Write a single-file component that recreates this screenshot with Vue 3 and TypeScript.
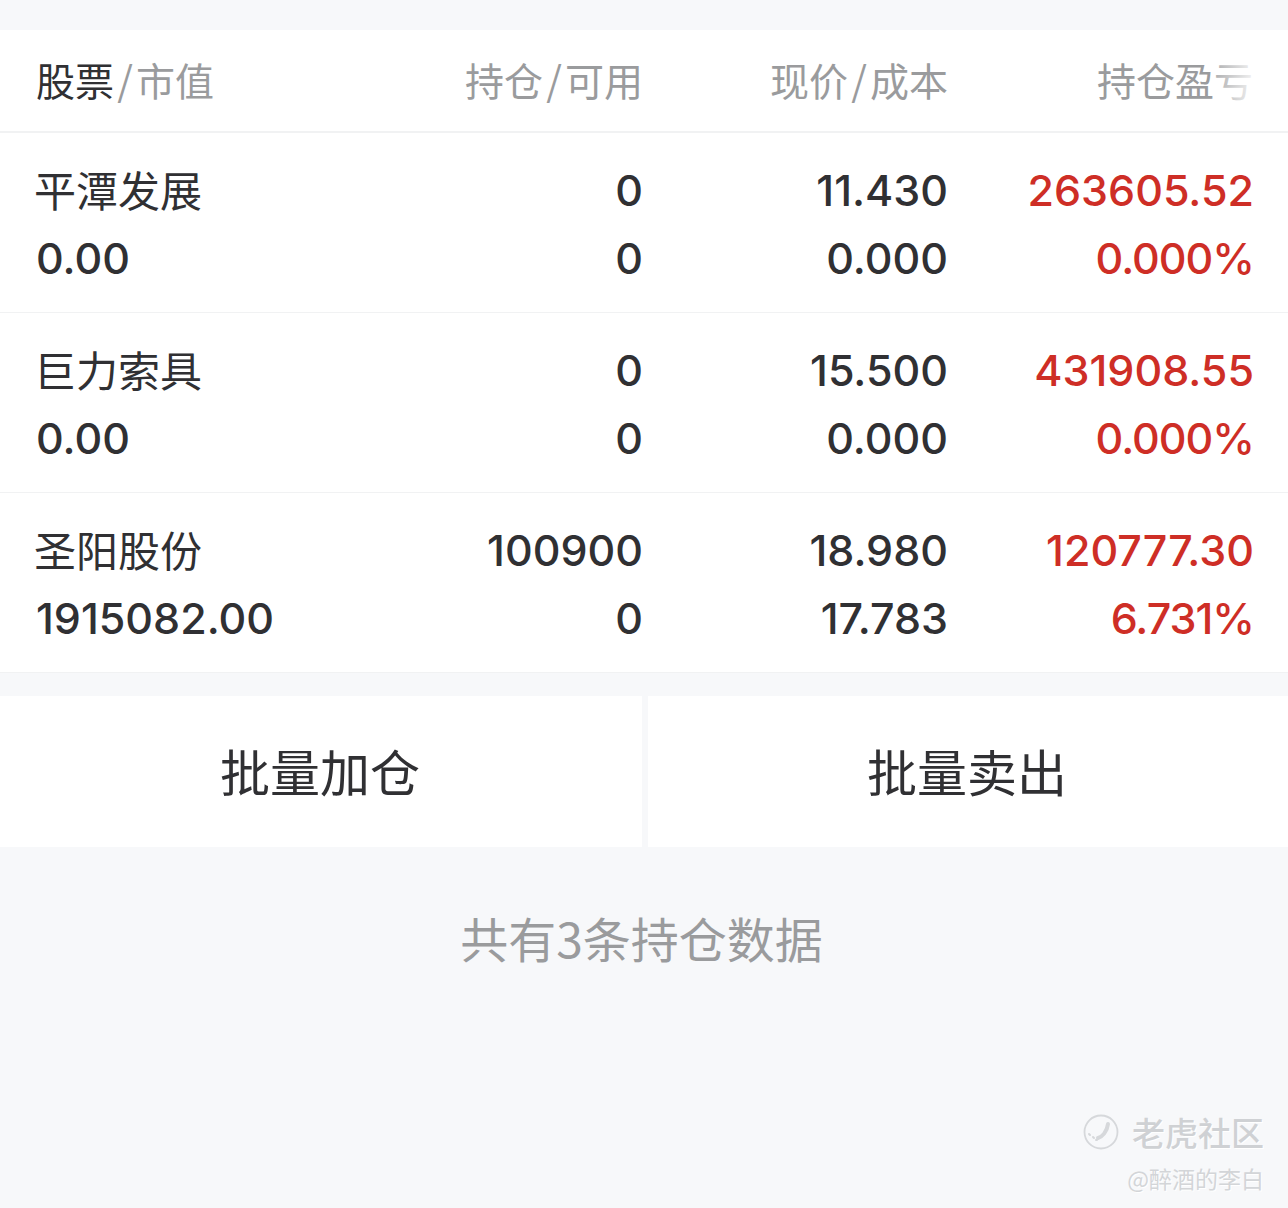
<script setup lang="ts">
interface Row { name: string; value: string; hold: string; avail: string; price: string; cost: string; pl: string; pct: string }
const rows: Row[] = [
  { name: '平潭发展', value: '0.00', hold: '0', avail: '0', price: '11.430', cost: '0.000', pl: '263605.52', pct: '0.000%' },
  { name: '巨力索具', value: '0.00', hold: '0', avail: '0', price: '15.500', cost: '0.000', pl: '431908.55', pct: '0.000%' },
  { name: '圣阳股份', value: '1915082.00', hold: '100900', avail: '0', price: '18.980', cost: '17.783', pl: '120777.30', pct: '6.731%' },
]
</script>

<template>
  <div class="page">
    <div class="table">
      <div class="head grid">
        <div class="hc left"><span class="dark">股票</span><i>/</i><span>市值</span></div>
        <div class="hc"><span>持仓</span><i>/</i><span>可用</span></div>
        <div class="hc"><span>现价</span><i>/</i><span>成本</span></div>
        <div class="hc last"><span>持仓盈亏</span></div>
        <div class="fade"></div>
      </div>
      <div v-for="r in rows" :key="r.name" class="row grid">
        <div class="cell left">
          <div class="name">{{ r.name }}</div>
          <div class="num">{{ r.value }}</div>
        </div>
        <div class="cell">
          <div class="num">{{ r.hold }}</div>
          <div class="num">{{ r.avail }}</div>
        </div>
        <div class="cell">
          <div class="num">{{ r.price }}</div>
          <div class="num">{{ r.cost }}</div>
        </div>
        <div class="cell red">
          <div class="num">{{ r.pl }}</div>
          <div class="num pct">{{ r.pct }}</div>
        </div>
      </div>
    </div>
    <div class="actions">
      <button class="btn">批量加仓</button>
      <button class="btn">批量卖出</button>
    </div>
    <div class="count">共有3条持仓数据</div>
    <div class="mark">
      <div class="brand">
        <svg width="38" height="38" viewBox="0 0 38 38" fill="none" stroke="#d6d8db">
          <circle cx="19" cy="19" r="16.5" stroke-width="1.8" />
          <path d="M16 25c4-1 9-6 10-14" stroke-width="4" stroke-linecap="round" />
          <path d="M7 21l1 1M11 24l1 1M14 27l1 0" stroke-width="2" stroke-linecap="round" />
        </svg>
        <span>老虎社区</span>
      </div>
      <div class="user">@醉酒的李白</div>
    </div>
  </div>
</template>

<style scoped>
.page {
  position: relative;
  width: 1288px;
  height: 1208px;
  overflow: hidden;
  padding-top: 30px;
  box-sizing: border-box;
  background: #f7f8fa;
  font-family: Inter, "Noto Sans CJK SC", sans-serif;
  color: #303033;
}
.table { background: #fff; }
.grid {
  display: grid;
  grid-template-columns: 301px 305px 305px 305px;
  padding: 0 36px;
}
.head {
  position: relative;
  height: 103px;
  box-sizing: border-box;
  border-bottom: 2px solid #f1f2f3;
  align-items: center;
  padding-bottom: 3px;
}
.hc {
  display: flex;
  justify-content: flex-end;
  align-items: center;
  font-family: "Noto Sans CJK SC", sans-serif;
  font-size: 39px;
  font-weight: 400;
  color: #9a9b9d;
  margin-right: -1px;
}
.hc.left { justify-content: flex-start; margin-right: 0; }
.hc i {
  font-style: normal;
  width: 22px;
  text-align: center;
  font-size: 40px;
}
.dark { color: #303033; font-weight: 400; }
.fade {
  position: absolute;
  top: 20px;
  right: 30px;
  width: 44px;
  height: 60px;
  background: linear-gradient(to right, rgba(255,255,255,0.2), rgba(255,255,255,0.95));
}
.row {
  height: 180px;
  box-sizing: border-box;
  border-bottom: 1px solid #f1f2f3;
  padding-top: 23px;
}
.cell { text-align: right; margin-right: -1px; }
.cell.left { text-align: left; margin-right: 0; }
.cell.red { margin-right: -2px; }
.cell > div { height: 68px; line-height: 68px; white-space: nowrap; }
.num { font-size: 43px; font-weight: 500; }
.pct { letter-spacing: -1px; }
.name {
  font-family: "Noto Sans CJK SC", sans-serif;
  font-size: 42px;
  line-height: 66px !important;
  font-weight: 400;
  margin-left: -2px;
}
.red { color: #ce2e26; }
.actions {
  display: grid;
  grid-template-columns: 642px 640px;
  gap: 6px;
  margin-top: 23px;
}
.btn {
  height: 151px;
  border: none;
  padding: 0 2px 4px 0;
  background: #fff;
  font-family: "Noto Sans CJK SC", sans-serif;
  font-size: 50px;
  font-weight: 400;
  color: #303033;
}
.count {
  margin-top: 60px;
  padding-right: 5px;
  text-align: center;
  font-family: "Noto Sans CJK SC", sans-serif;
  font-size: 48px;
  line-height: 60px;
  font-weight: 400;
  color: #9a9b9d;
}
.mark {
  position: absolute;
  right: 24px;
  bottom: 16px;
  text-align: right;
  font-family: "Noto Sans CJK SC", sans-serif;
}
.brand {
  display: flex;
  align-items: center;
  justify-content: flex-end;
  gap: 12px;
  color: #cfd1d4;
  font-size: 33px;
  line-height: 44px;
  font-weight: 500;
  text-shadow: 1px 1px 0 #fff;
}
.user {
  margin-top: 10px;
  color: #d3d5d8;
  font-size: 23px;
  line-height: 28px;
  text-shadow: 1px 1px 0 #fff;
}
</style>
